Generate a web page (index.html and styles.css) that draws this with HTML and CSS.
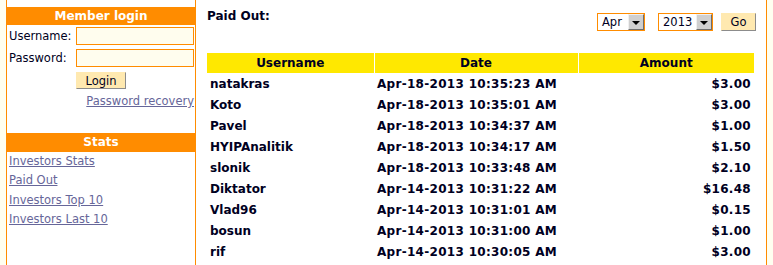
FILE: index.html
```html
<!DOCTYPE html>
<html lang="en">

<head>
    <meta charset="UTF-8">
    <title>Paid Out</title>
    <link rel="stylesheet" href="styles.css">
</head>

<body>
    <div class="page">
        <!-- Left column -->
        <div class="sidebar">
            <div class="box-title">Member login</div>
            <form class="login">
                <label>Username:</label>
                <input type="text" class="field">
                <label>Password:</label>
                <input type="password" class="field">
                <span></span>
                <div><button type="button" class="btn btn-login">Login</button></div>
            </form>
            <div class="recovery"><a href="#">Password recovery</a></div>

            <div class="box-title stats-title">Stats</div>
            <ul class="links">
                <li><a href="#">Investors Stats</a></li>
                <li><a href="#">Paid Out</a></li>
                <li><a href="#">Investors Top 10</a></li>
                <li><a href="#">Investors Last 10</a></li>
            </ul>
        </div>

        <!-- Main content -->
        <div class="main">
            <div class="toolbar">
                <h2>Paid Out:</h2>
                <div class="controls">
                    <div class="select sel-month"><span>Apr</span><span class="arrow"></span></div>
                    <div class="select sel-year"><span>2013</span><span class="arrow"></span></div>
                    <button type="button" class="btn btn-go">Go</button>
                </div>
            </div>

            <table class="payouts">
                <colgroup>
                    <col class="c-user">
                    <col class="c-date">
                    <col class="c-amount">
                </colgroup>
                <tr>
                    <th>Username</th>
                    <th>Date</th>
                    <th>Amount</th>
                </tr>
                <tr><td>natakras</td><td class="date">Apr-18-2013 10:35:23 AM</td><td class="amount">$3.00</td></tr>
                <tr><td>Koto</td><td class="date">Apr-18-2013 10:35:01 AM</td><td class="amount">$3.00</td></tr>
                <tr><td>Pavel</td><td class="date">Apr-18-2013 10:34:37 AM</td><td class="amount">$1.00</td></tr>
                <tr><td>HYIPAnalitik</td><td class="date">Apr-18-2013 10:34:17 AM</td><td class="amount">$1.50</td></tr>
                <tr><td>slonik</td><td class="date">Apr-18-2013 10:33:48 AM</td><td class="amount">$2.10</td></tr>
                <tr><td>Diktator</td><td class="date">Apr-14-2013 10:31:22 AM</td><td class="amount">$16.48</td></tr>
                <tr><td>Vlad96</td><td class="date">Apr-14-2013 10:31:01 AM</td><td class="amount">$0.15</td></tr>
                <tr><td>bosun</td><td class="date">Apr-14-2013 10:31:00 AM</td><td class="amount">$1.00</td></tr>
                <tr><td>rif</td><td class="date">Apr-14-2013 10:30:05 AM</td><td class="amount">$3.00</td></tr>
            </table>
        </div>
    </div>
</body>

</html>
```

FILE: styles.css
```css
/* Page */
html, body {
    height: 100%;
}

body {
    margin: 0;
    overflow: hidden;
    background-color: #fffff0;
    color: #000022;
    font-family: "DejaVu Sans", Verdana, sans-serif;
    font-size: 11.5px;
}

.page {
    display: flex;
    width: 759px;
    height: 100%;
    margin-left: 6px;
    background-color: #fff;
    border-left: 1px solid #ff8c00;
    border-right: 1px solid #ff8c00;
}

/* Sidebar */
.sidebar {
    width: 188px;
    padding-top: 7px;
    border-right: 1px solid #ff8c00;
}

.box-title {
    margin: 0 -1px;
    background-color: #ff8c00;
    color: #fff;
    font-weight: bold;
    font-size: 12px;
    text-align: center;
    height: 18px;
    line-height: 18px;
}

.stats-title {
    height: 19px;
    line-height: 19px;
    margin-top: 24px;
}

.login {
    display: grid;
    grid-template-columns: 67px 118px;
    row-gap: 4px;
    margin: 2px 0 0 2px;
    align-items: center;
}

.field {
    box-sizing: border-box;
    width: 118px;
    height: 18px;
    margin: 0;
    border: 1px solid #ff8c00;
    background-color: #fffdee;
}

.btn {
    box-sizing: border-box;
    margin: 0;
    padding: 0;
    font-family: "DejaVu Sans", Verdana, sans-serif;
    font-size: 11.5px;
    color: #000022;
    background-color: #ffe9b0;
    border: 1px solid #ffe9b0;
    border-right-color: #8c8c8c;
    border-bottom-color: #8c8c8c;
}

.btn-login {
    width: 50px;
    height: 17px;
    margin-top: 1px;
}

.recovery {
    text-align: right;
    padding-right: 1px;
    margin-top: 4px;
    line-height: 16px;
}

a {
    color: #666699;
}

.links {
    list-style: none;
    margin: 0;
    padding: 0 0 0 2px;
}

.links li {
    line-height: 19.4px;
}

/* Main area */
.main {
    flex: 1;
    padding: 8px 10px 0 11px;
}

.toolbar {
    display: flex;
    justify-content: space-between;
    align-items: flex-start;
}

.toolbar h2 {
    margin: 0;
    font-size: 12px;
    line-height: 16px;
}

.controls {
    display: flex;
    margin-top: 5px;
}

.select {
    box-sizing: border-box;
    display: flex;
    justify-content: space-between;
    align-items: center;
    height: 18px;
    padding: 0 0 0 4px;
    border: 1px solid #ff8c00;
    background-color: #fff;
    font-size: 11.5px;
}

.sel-month {
    width: 48px;
    margin-right: 13px;
}

.sel-year {
    width: 55px;
    margin-right: 8px;
}

.arrow {
    box-sizing: border-box;
    width: 16px;
    height: 16px;
    background-color: #cfcfcf;
    border: 1px solid #6e6e6e;
    border-top-color: #f0f0f0;
    border-left-color: #f0f0f0;
    position: relative;
}

.arrow::after {
    content: "";
    position: absolute;
    left: 3px;
    top: 6px;
    border-left: 4px solid transparent;
    border-right: 4px solid transparent;
    border-top: 4px solid #000;
}

.btn-go {
    width: 35px;
    height: 18px;
}

/* Table */
.payouts {
    width: 547px;
    margin-top: 22px;
    border-collapse: collapse;
    font-size: 12px;
    font-weight: bold;
}

.c-user { width: 167px; }
.c-date { width: 204px; }
.c-amount { width: 176px; }

.payouts th {
    background-color: #ffe800;
    height: 20px;
    padding: 0;
    text-align: center;
}

.payouts th + th {
    border-left: 1px solid #fff;
}

.payouts td {
    height: 20px;
    padding: 1px 3px 0;
}

.payouts .date {
    letter-spacing: 0.3px;
}

.payouts .amount {
    text-align: right;
    letter-spacing: 0.3px;
}
```
